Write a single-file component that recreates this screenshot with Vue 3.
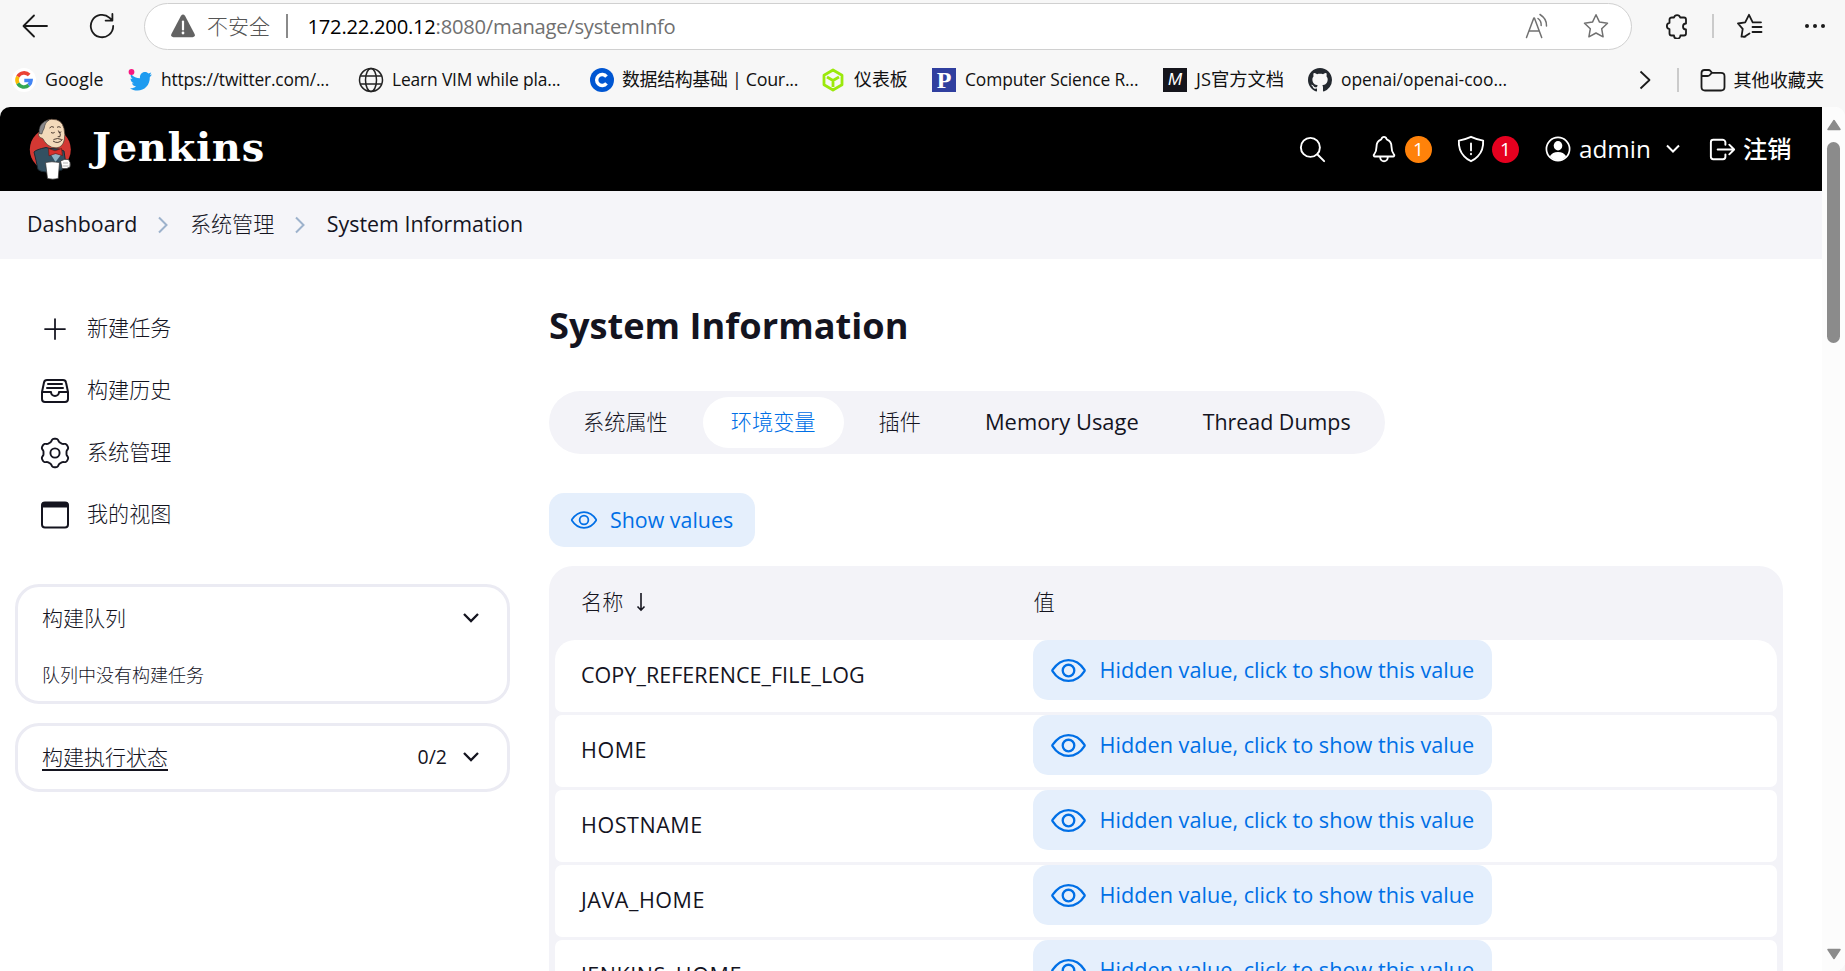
<script setup>
const envNames = ['COPY_REFERENCE_FILE_LOG', 'HOME', 'HOSTNAME', 'JAVA_HOME', 'JENKINS_HOME']

const eyePath =
  'M255.66 112c-77.94 0-157.89 45.11-220.83 135.33a16 16 0 00-.27 17.77C82.92 340.8 161.8 400 255.66 400c92.84 0 173.34-59.38 221.79-135.25a16.14 16.14 0 000-17.47C428.89 172.28 347.8 112 255.66 112z'

// Six-lobed outline of the settings gear, centred on the origin.
const gearPath =
  Array.from({ length: 120 }, (_, i) => {
    const t = (i * Math.PI) / 60
    const r = 12.9 + (1.4 * Math.tanh(1.8 * Math.cos(6 * t))) / Math.tanh(1.8)
    return `${i ? 'L' : 'M'}${(r * Math.sin(t)).toFixed(2)} ${(-r * Math.cos(t)).toFixed(2)}`
  }).join('') + 'Z'
</script>

<template>
  <div class="window">
    <div class="toolbar">
      <svg class="back" viewBox="0 0 26 24" width="26" height="24"><path d="M25 12H2M12 1.5L1.5 12 12 22.5" /></svg>
      <svg class="reload" viewBox="0 0 26 26" width="26" height="26"><path d="M24.2 13a11.2 11.2 0 1 1-3.6-8.2L23 7M23.4 1v6.6h-6.8" /></svg>
      <div class="address">
        <svg class="warn" viewBox="0 0 26 24" width="26" height="24">
          <path d="M11 1.8q2-2.6 4 0L24.6 20q1 3-2 3.2H3.4q-3-.2-2-3.2z" fill="#636363" />
          <path d="M13 7.5v8" stroke="#fff" stroke-width="2.2" /><circle cx="13" cy="19" r="1.4" fill="#fff" />
        </svg>
        <span class="insecure">不安全</span>
        <i class="addr-sep"></i>
        <span class="url"><b>172.22.200.12</b>:8080/manage/systemInfo</span>
        <svg class="read" viewBox="0 0 24 26" width="24" height="26">
          <path d="M1.5 24.5L8.8 5h.6l7.3 19.5M4.3 18h9.6M13 5.500q3.500 2.500 3.200 7M15 1.500q7 4.500 6.500 11.500" />
        </svg>
        <svg class="star" viewBox="0 0 26 26" width="26" height="26"><path d="M13 1.800l3.500 7.300 8 1.100-5.800 5.600 1.400 8L13 20l-7.100 3.800 1.400-8-5.800-5.600 8-1.100z" /></svg>
      </div>
      <svg class="puzzle" viewBox="0 0 24 26" width="24" height="26">
        <path d="M7 4.500h2a3.200 3.200 0 0 1 6.200 0H19q2 0 2 2v4a3 3 0 0 0 0 6v4q0 2-2 2h-3.600a3.200 3.200 0 0 1-6.400 0H6.500q-2 0-2-2v-4.300a3.200 3.200 0 0 1 0-6.300V6.500q0-2 2.500-2z" />
      </svg>
      <i class="tool-sep"></i>
      <svg class="favs" viewBox="0 0 26 26" width="26" height="26">
        <path d="M8.500 23.500l-4 .2 1.200-7.800L1 10.500l7.200-1.200L12 1.800l3.700 7.500H24M15.500 14H24.500M15.500 19H24.500M12.500 20.500l-5.500 3.500" />
      </svg>
      <svg class="dots" viewBox="0 0 22 6" width="22" height="6"><circle cx="3" cy="3" r="2" /><circle cx="11" cy="3" r="2" /><circle cx="19" cy="3" r="2" /></svg>
    </div>

    <div class="bookmarks">
      <div class="bm b1">
        <svg viewBox="0 0 24 24" width="24" height="24">
          <circle cx="12" cy="12" r="12" fill="#fff" />
          <g fill="none" stroke-width="3.600">
            <path d="M17.200 7.100A7 7 0 0 0 5.900 8.600" stroke="#ea4335" />
            <path d="M5.900 8.600a7 7 0 0 0 0 6.800" stroke="#fbbc05" />
            <path d="M5.900 15.400a7 7 0 0 0 10.800 1.800" stroke="#34a853" />
            <path d="M16.700 17.200A7 7 0 0 0 19 12.500h-6.700" stroke="#4285f4" />
          </g>
        </svg><span>Google</span>
      </div>
      <div class="bm b2">
        <svg viewBox="0 0 24 24" width="24" height="24">
          <path d="M3 6c2.500 3 5.500 4 9 4.200-.6-3.500 2-6.200 5-6.200 1.500 0 2.700.6 3.500 1.500l2.700-1-1.200 2.400L24 6.500l-2.200 2.700C22 17 16.500 22.500 9.500 22.500c-3 0-5.500-.8-7.500-2.300 2.500.1 4.500-.5 6-1.800-2-.2-3.500-1.500-4-3.200h2C3.800 14.500 2.500 12.800 2.500 10.500l2 .5C2.800 9.500 2.300 8 3 6z" fill="#1d9bf0" />
          <circle cx="3.500" cy="4" r="2.900" fill="#f91880" />
        </svg><span>https://twitter.com/...</span>
      </div>
      <div class="bm b3">
        <svg viewBox="0 0 26 26" width="26" height="26" fill="none" stroke="#222" stroke-width="1.500">
          <circle cx="13" cy="13" r="11.500" /><ellipse cx="13" cy="13" rx="5.500" ry="11.500" /><path d="M2.500 9h21M2.500 17h21" />
        </svg><span>Learn VIM while pla...</span>
      </div>
      <div class="bm b4">
        <svg viewBox="0 0 24 24" width="24" height="24"><circle cx="12" cy="12" r="12" fill="#0056d2" /><path d="M16.500 8.600a5.500 5.500 0 1 0 0 6.800" fill="none" stroke="#fff" stroke-width="3.400" /></svg><span>数据结构基础 | Cour...</span>
      </div>
      <div class="bm b5">
        <svg viewBox="0 0 22 24" width="22" height="24" fill="none" stroke="#9be90c" stroke-width="2.800" stroke-linejoin="round"><path d="M11 2l9 5.200v9.600L11 22l-9-5.200V7.200zM5 9l6 3.500L17 9M11 12.500V19" /></svg><span>仪表板</span>
      </div>
      <div class="bm b6"><i class="tile navy">P</i><span>Computer Science R...</span></div>
      <div class="bm b7"><i class="tile ink">M</i><span>JS官方文档</span></div>
      <div class="bm b8">
        <svg viewBox="0 0 16 16" width="24" height="24"><path fill="#24292f" d="M8 0C3.580 0 0 3.580 0 8c0 3.540 2.290 6.530 5.470 7.590.4.070.55-.17.55-.38 0-.19-.01-.82-.01-1.490-2.010.37-2.530-.49-2.690-.94-.09-.23-.48-.94-.82-1.130-.28-.15-.68-.52-.01-.53.63-.01 1.080.58 1.230.82.72 1.210 1.870.87 2.330.66.07-.52.28-.87.51-1.070-1.780-.2-3.640-.89-3.640-3.950 0-.87.31-1.590.82-2.150-.08-.2-.36-1.020.08-2.120 0 0 .67-.21 2.200.82.64-.18 1.320-.27 2-.27s1.360.09 2 .27c1.530-1.040 2.200-.82 2.200-.82.44 1.100.16 1.920.08 2.120.51.56.82 1.270.82 2.150 0 3.070-1.870 3.750-3.650 3.950.29.25.54.73.54 1.480 0 1.070-.01 1.930-.01 2.200 0 .21.15.46.55.38A8.010 8.010 0 0 0 16 8c0-4.420-3.580-8-8-8z" /></svg><span>openai/openai-coo...</span>
      </div>
      <svg class="more" viewBox="0 0 12 20" width="12" height="20"><path d="M1.500 1.500L10.500 10l-9 8.500" /></svg>
      <i class="bm-sep"></i>
      <svg class="folder" viewBox="0 0 26 24" width="26" height="24"><path d="M1.500 8V5q0-3 3-3h4q1.200 0 2 1l1.500 1.800H21q3.500 0 3.500 3.200v11q0 3.500-3.500 3.500H5q-3.500 0-3.500-3.500zM1.500 8h6q1.500 0 2.300-1l2-2.200" /></svg>
      <span class="others">其他收藏夹</span>
    </div>

    <div class="viewport">
      <div class="page">
        <header class="header">
          <svg class="butler" viewBox="0 0 44 62" width="44" height="62">
            <ellipse cx="21.300" cy="31.500" rx="20.500" ry="21" fill="#d33833" />
            <path d="M5 34Q7 31.500 17 29.500l4 1 9 .5 5 2 1.500 10.500L33 52l-16 2q-6-.5-8-2.500Q7 42 5 34z" fill="#335061" stroke="#1b2a33" stroke-width="1" />
            <path d="M11.500 10Q14 2 22.500 1.300 33 1 35 10.500q1.500 6.500.3 11.500-1.600 7-7.300 7.800-5.500.6-9.500-3-3-2.800-4.800-6.300-3.700-.5-4.200-3.500Q9.200 14 12 13z" fill="#f3dabb" stroke="#5b4638" stroke-width=".8" />
            <path d="M10.300 15.500Q9 7.500 15.500 3.600q2.500-1.400 4.500-1.600-3.800 2.500-4.200 5.500-.5 3.500-2 5.500-.5 1.800-1 3z" fill="#8a898c" stroke="#333" stroke-width=".6" />
            <path d="M20.500 10q2-2.500 4.500-.7M28 9.300q2-1.300 3.700.1M22 14.500q2.200 1.400 3.700-.2M29.500 14q1.700 1.100 2.800-.2M29.300 12.500q3.200 4 1.700 6.200h-2.300M24 23q5 3.600 9.500-1.500M24.500 21.500q4-2 8.200 0" fill="none" stroke="#3c2d25" stroke-width=".9" />
            <path d="M21 35l5.500 9 6-8z" fill="#8fb3c4" />
            <path d="M19.500 30.500l6.500 2.300 6.500-2.300 1 7-7-1.900-6.500 2.200z" fill="#d9302b" stroke="#6b1512" stroke-width=".7" />
            <path d="M16.500 44.500q6-1.500 14 0l-1.300 16q-5.500 1.400-10.700 0z" fill="#fff" stroke="#333" stroke-width=".7" />
            <path d="M31.500 43q4-2.500 8-1.500 2.500 2.500 1.500 7.500-3 2.500-8 1.500z" fill="#fff" stroke="#333" stroke-width=".8" />
            <path d="M34 45h5M33.500 48h6" stroke="#aaa" stroke-width=".9" fill="none" />
          </svg>
          <span class="wordmark">Jenkins</span>
          <svg class="ion search" viewBox="0 0 512 512" width="31" height="31"><path d="M221.090 64a157.090 157.090 0 10157.090 157.090A157.100 157.100 0 00221.090 64zM338.290 338.290L448 448" /></svg>
          <svg class="ion bell" viewBox="0 0 512 512" width="30" height="30"><path d="M427.680 351.430C402 320 383.870 304 383.870 217.350 383.870 138 343.350 109.730 310 96c-4.430-1.820-8.600-6-9.950-10.550C294.200 65.540 277.800 48 256 48s-38.210 17.550-44 37.470c-1.350 4.600-5.520 8.710-9.950 10.530-33.390 13.750-73.870 41.920-73.870 121.350C128.130 304 110 320 84.320 351.430 73.680 364.450 83 384 101.610 384h308.880c18.510 0 27.770-19.610 17.190-32.570zM320 384v16a64 64 0 01-128 0v-16" /></svg>
          <span class="badge orange">1</span>
          <svg class="ion shield" viewBox="0 0 512 512" width="30" height="30"><path d="M463.100 112.370C373.680 96.330 336.710 84.450 256 48c-80.710 36.450-117.680 48.330-207.100 64.370C32.700 369.130 240.580 457.790 256 464c15.420-6.210 223.300-94.870 207.100-351.630zM256 160v120M256 335v12" /></svg>
          <span class="badge red">1</span>
          <svg class="person" viewBox="0 0 26 26" width="26" height="26">
            <circle cx="13" cy="13" r="11.600" fill="none" stroke="#fff" stroke-width="1.700" />
            <ellipse cx="13" cy="9.800" rx="4.300" ry="4.700" fill="#fff" />
            <path d="M4.800 20.200q2.600-4.300 8.200-4.300t8.200 4.300q-3.500 4-8.200 4t-8.200-4z" fill="#fff" />
          </svg>
          <span class="user">admin</span>
          <svg class="down" viewBox="0 0 16 10" width="16" height="10"><path d="M2 1.500l6 6 6-6" /></svg>
          <svg class="ion exit" viewBox="0 0 512 512" width="31" height="31"><path d="M304 336v40a40 40 0 01-40 40H104a40 40 0 01-40-40V136a40 40 0 0140-40h152c22.090 0 48 17.910 48 40v40M368 336l80-80-80-80M176 256h256" /></svg>
          <span class="logout">注销</span>
        </header>

        <nav class="crumbs">
          <span class="lat">Dashboard</span>
          <svg viewBox="0 0 12 18" width="12" height="18"><path d="M2 1.500L9.500 9 2 16.500" /></svg>
          <span class="cjk">系统管理</span>
          <svg viewBox="0 0 12 18" width="12" height="18"><path d="M2 1.500L9.500 9 2 16.500" /></svg>
          <span class="lat">System Information</span>
        </nav>

        <div class="body">
          <aside class="side">
            <div class="task">
              <svg class="ion" viewBox="0 0 512 512" width="32" height="32"><path d="M256 96v320M96 256h320" stroke-width="28" /></svg><span>新建任务</span>
            </div>
            <div class="task">
              <svg class="ion" viewBox="0 0 512 512" width="32" height="32"><path d="M384 80H128c-26 0-43 14-48 40L48 272v112a48.140 48.140 0 0048 48h320a48.140 48.140 0 0048-48V272l-32-152c-5-27-23-40-48-40zM48 272h144M320 272h144M192 272a64 64 0 00128 0M144 144h224M128 208h256" /></svg><span>构建历史</span>
            </div>
            <div class="task">
              <svg viewBox="-16 -16 32 32" width="32" height="32" fill="none" stroke="#14141f" stroke-width="1.900"><path :d="gearPath" stroke-linejoin="round" /><circle r="4.600" /></svg><span>系统管理</span>
            </div>
            <div class="task">
              <svg viewBox="0 0 32 32" width="32" height="32"><rect x="3" y="3.500" width="26" height="25" rx="3" fill="none" stroke="#14141f" stroke-width="2" /><path d="M2.500 8.500V6q0-3 3-3h21q3 0 3 3v2.500z" fill="#14141f" /></svg><span>我的视图</span>
            </div>

            <section class="pane queue">
              <div class="pane-head"><span>构建队列</span><svg class="down" viewBox="0 0 18 12" width="18" height="12"><path d="M2 2l7 7 7-7" /></svg></div>
              <p>队列中没有构建任务</p>
            </section>
            <section class="pane executors">
              <div class="pane-head"><a>构建执行状态</a><em>0/2</em><svg class="down" viewBox="0 0 18 12" width="18" height="12"><path d="M2 2l7 7 7-7" /></svg></div>
            </section>
          </aside>

          <main class="main">
            <h1>System Information</h1>
            <div class="tabs">
              <span class="tab cjk">系统属性</span>
              <span class="tab cjk active">环境变量</span>
              <span class="tab cjk">插件</span>
              <span class="tab memory">Memory Usage</span>
              <span class="tab threads">Thread Dumps</span>
            </div>
            <button class="show-all">
              <svg class="ion" viewBox="0 0 512 512" width="28" height="28"><path :d="eyePath" /><circle cx="256" cy="256" r="80" /></svg><span>Show values</span>
            </button>
            <div class="table">
              <div class="thead">
                <span class="cjk">名称</span>
                <svg viewBox="0 0 10 20" width="10" height="20"><path d="M5 1v17M1.500 14.500L5 18.200l3.500-3.700" /></svg>
                <span class="cjk value-head">值</span>
              </div>
              <div v-for="name in envNames" :key="name" class="row">
                <span class="name">{{ name }}</span>
                <button class="reveal">
                  <svg class="ion" viewBox="0 0 512 512" width="37" height="37"><path :d="eyePath" /><circle cx="256" cy="256" r="80" /></svg><span>Hidden value, click to show this value</span>
                </button>
              </div>
            </div>
          </main>
        </div>
      </div>

      <div class="scroll">
        <svg viewBox="0 0 16 12" width="16" height="12"><path d="M8 1.500L14 10.500H2z" /></svg>
        <i class="thumb"></i>
        <svg class="end" viewBox="0 0 16 12" width="16" height="12"><path d="M8 10.500L14 1.500H2z" /></svg>
      </div>
    </div>
  </div>
</template>

<style>
html,
body {
  overflow: hidden;
  background: #f7f7f7;
}
</style>

<style scoped>
* {
  box-sizing: border-box;
}
svg,
i,
span {
  flex: none;
}
.window {
  width: 1845px;
  height: 971px;
  overflow: hidden;
  display: flex;
  flex-direction: column;
  background: #f7f7f7;
  color: #14141f;
  font-family: 'Open Sans', 'Noto Sans CJK SC', sans-serif;
  white-space: nowrap;
}
.cjk,
.task,
.pane,
.insecure,
.others,
.logout {
  font-family: 'Noto Sans CJK SC', sans-serif;
  font-weight: 300;
}

.toolbar {
  height: 53px;
  flex: none;
  display: flex;
  align-items: center;
  padding: 0 0 1px 22px;
}
.toolbar svg {
  fill: none;
  stroke: #1b1b1b;
  stroke-width: 1.8;
  stroke-linejoin: round;
  stroke-linecap: round;
}
.reload {
  margin-left: 41px;
}
.address {
  width: 1488px;
  height: 47px;
  margin-left: 29px;
  border: 1.5px solid #d0d0d0;
  border-radius: 24px;
  background: #fff;
  display: flex;
  align-items: center;
  padding-left: 25px;
}
.address .warn {
  stroke: none;
}
.insecure {
  margin-left: 11px;
  padding-bottom: 2px;
  font-size: 21px;
  line-height: 30px;
  color: #555;
}
.addr-sep {
  width: 1.5px;
  height: 24px;
  margin-left: 16px;
  background: #8a8a8a;
}
.url {
  width: 1190px;
  margin-left: 20px;
  font-size: 20.2px;
  line-height: 30px;
  letter-spacing: -0.25px;
  color: #707070;
}
.url b {
  font-weight: 400;
  color: #000;
}
.toolbar .read,
.toolbar .star {
  stroke: #717171;
  stroke-width: 1.5;
}
.read {
  margin-left: 27px;
}
.star {
  margin-left: 34px;
}
.puzzle {
  margin-left: 33px;
}
.tool-sep,
.bm-sep {
  width: 1.5px;
  height: 24px;
  background: #cbcbcb;
}
.tool-sep {
  margin-left: 23px;
}
.favs {
  margin-left: 23px;
}
.toolbar .dots {
  margin-left: 41px;
  fill: #1b1b1b;
  stroke: none;
}

.bookmarks {
  height: 54px;
  flex: none;
  display: flex;
  align-items: center;
  padding-left: 12px;
  font-size: 17.4px;
  line-height: 24px;
  color: #111;
}
.bm {
  height: 26px;
  flex: none;
  display: flex;
  align-items: center;
  gap: 9px;
}
.bm span {
  padding-bottom: 2px;
}
.b1 { width: 116px; font-size: 17.8px; }
.b2 { width: 230px; letter-spacing: -0.18px; }
.b3 { width: 232px; gap: 8px; letter-spacing: -0.15px; }
.b4 { width: 232px; gap: 8px; letter-spacing: -0.3px; }
.b5 { width: 110px; gap: 10px; }
.b6 { width: 231px; letter-spacing: -0.13px; }
.b7 { width: 145px; }
.b8 { width: 331px; }
.b4,
.b5 {
  font-size: 17.9px;
}
.b7 {
  font-size: 18.3px;
}
.tile {
  width: 24px;
  height: 24px;
  display: flex;
  align-items: center;
  justify-content: center;
  color: #fff;
}
.navy {
  background: #303f9f;
  font: 700 24px/24px 'Liberation Serif', serif;
}
.ink {
  background: #15151c;
  font: italic 400 17px/24px 'Liberation Sans', sans-serif;
}
.more,
.folder {
  fill: none;
  stroke: #1b1b1b;
  stroke-width: 1.8;
  stroke-linejoin: round;
}
.bm-sep {
  margin-left: 26px;
}
.folder {
  margin-left: 21px;
}
.others {
  margin-left: 8px;
  padding-bottom: 3px;
  font-size: 18.1px;
  font-weight: 400;
}

.viewport {
  height: 864px;
  flex: none;
  display: flex;
  border-radius: 10px 10px 10px 0;
  overflow: hidden;
  background: #fff;
}
.page {
  width: 1822px;
  flex: none;
  overflow: hidden;
}
.ion {
  fill: none;
  stroke: currentColor;
  stroke-width: 32;
  stroke-linecap: round;
  stroke-linejoin: round;
}

.header {
  height: 84px;
  background: #000;
  color: #fff;
  display: flex;
  align-items: center;
  padding-left: 29px;
}
.wordmark {
  width: 1178px;
  margin-left: 19px;
  padding-bottom: 4px;
  font: 700 40px/50px 'DejaVu Serif', serif;
  letter-spacing: 0.7px;
}
.search {
  margin-left: 27px;
}
.bell {
  margin-left: 41px;
}
.badge {
  width: 27px;
  height: 27px;
  border-radius: 50%;
  font-size: 19px;
  line-height: 26px;
  text-align: center;
}
.orange {
  margin-left: 6px;
  background: #ff820a;
}
.shield {
  margin-left: 24px;
}
.red {
  margin-left: 6px;
  background: #e6001f;
}
.person {
  margin-left: 26px;
}
.user {
  width: 73px;
  margin-left: 8px;
  padding-bottom: 1px;
  font-size: 24.3px;
  line-height: 34px;
  font-weight: 500;
}
.down {
  fill: none;
  stroke: currentColor;
  stroke-width: 2;
}
.user + .down {
  margin-left: 13px;
}
.exit {
  margin-left: 26px;
}
.logout {
  margin-left: 5px;
  padding-bottom: 2px;
  font-size: 24.3px;
  line-height: 34px;
  font-weight: 500;
}

.crumbs {
  height: 68px;
  background: #f5f5f9;
  display: flex;
  align-items: center;
  padding-left: 27px;
  font-size: 21.4px;
  line-height: 30px;
}
.crumbs .cjk {
  padding-bottom: 4px;
  font-size: 21.1px;
}
.crumbs .lat {
  padding-bottom: 2px;
}
.crumbs svg {
  margin: 0 20.5px 0 20px;
  fill: none;
  stroke: #9db2cc;
  stroke-width: 2;
}

.body {
  display: flex;
}
.side {
  width: 549px;
  flex: none;
  padding: 39px 0 0 15px;
}
.task {
  height: 62px;
  display: flex;
  align-items: center;
  padding-left: 24px;
  gap: 16px;
  font-size: 21.1px;
  line-height: 30px;
}
.task span {
  padding-bottom: 4px;
}
.pane {
  width: 495px;
  border: 3px solid #ebebf3;
  border-radius: 24px;
  padding-left: 24px;
}
.pane-head {
  height: 63px;
  display: flex;
  align-items: center;
  padding-right: 27px;
  font-size: 21px;
  line-height: 30px;
}
.pane-head span,
.pane-head a {
  padding-bottom: 4px;
}
.pane-head .down {
  margin: 0 0 2px auto;
  stroke-width: 2.3;
}
.pane-head a {
  text-decoration: underline;
  text-decoration-thickness: 2px;
  text-underline-offset: 4px;
}
.pane-head em {
  margin-left: auto;
  padding-bottom: 2px;
  font: 400 19.5px/30px 'Open Sans', sans-serif;
}
.pane-head em + .down {
  margin-left: 15px;
}
.queue {
  height: 120px;
  margin-top: 38px;
}
.queue p {
  margin: 11px 0 0;
  font-size: 18px;
  line-height: 26px;
}
.executors {
  height: 69px;
  margin-top: 19px;
}

.main {
  width: 1234px;
  flex: none;
}
h1 {
  margin: 41px 0 0;
  font-size: 36.2px;
  line-height: 50px;
  font-weight: 700;
}
.tabs {
  width: 836px;
  height: 63px;
  margin-top: 41px;
  padding: 6px;
  border-radius: 32px;
  background: #f3f3f8;
  display: flex;
  font-size: 21.4px;
  line-height: 50px;
}
.tab {
  height: 51px;
  padding: 0 28px;
  border-radius: 26px;
}
.tab.cjk {
  font-size: 21.2px;
  line-height: 48px;
  margin-right: 7px;
}
.active {
  background: #fff;
  color: #006fe6;
}
.memory {
  padding-left: 29px;
  font-size: 21.9px;
  margin-right: 7px;
}
.threads {
  padding-left: 29px;
}
button {
  border: 0;
  border-radius: 15px;
  background: #e5effc;
  color: #006fe6;
  font-family: 'Open Sans', sans-serif;
  display: flex;
  align-items: center;
  padding: 0;
  text-align: left;
}
button span {
  padding-bottom: 2px;
}
.show-all {
  width: 206px;
  height: 54px;
  margin-top: 39px;
  padding-left: 21px;
  gap: 12px;
  font-size: 21.4px;
}
.table {
  height: 500px;
  margin-top: 19px;
  padding: 0 6px;
  border-radius: 24px 24px 0 0;
  background: #f3f3f8;
}
.thead {
  height: 74px;
  display: flex;
  align-items: center;
  padding: 0 0 2px 26px;
  font-size: 21.2px;
  line-height: 30px;
}
.thead .cjk {
  padding-bottom: 2px;
}
.thead svg {
  width: 10px;
  margin-left: 13px;
  fill: none;
  stroke: #14141f;
  stroke-width: 1.6;
}
.value-head {
  margin-left: 387px;
}
.row {
  height: 72px;
  margin-bottom: 3px;
  border-radius: 7px;
  background: #fff;
  display: flex;
  align-items: flex-start;
}
.name {
  width: 478px;
  padding-left: 26px;
  font-size: 21.5px;
  line-height: 70px;
  font-kerning: none;
  letter-spacing: 0.55px;
}
.thead + .row {
  border-radius: 20px 20px 7px 7px;
}
.thead + .row .name {
  letter-spacing: 0.05px;
}
.reveal {
  width: 459px;
  height: 60px;
  padding-left: 17px;
  gap: 12.5px;
  font-size: 21.7px;
}

.scroll {
  width: 23px;
  flex: none;
  background: #fcfcfc;
  display: flex;
  flex-direction: column;
  align-items: center;
  padding: 12px 0 11px;
}
.scroll svg {
  fill: #8b8b8b;
  stroke: #8b8b8b;
  stroke-width: 1.5;
  stroke-linejoin: round;
}
.thumb {
  width: 13px;
  height: 201px;
  margin-top: 11px;
  border-radius: 7px;
  background: #8b8b8b;
}
.end {
  margin-top: auto;
}
</style>
